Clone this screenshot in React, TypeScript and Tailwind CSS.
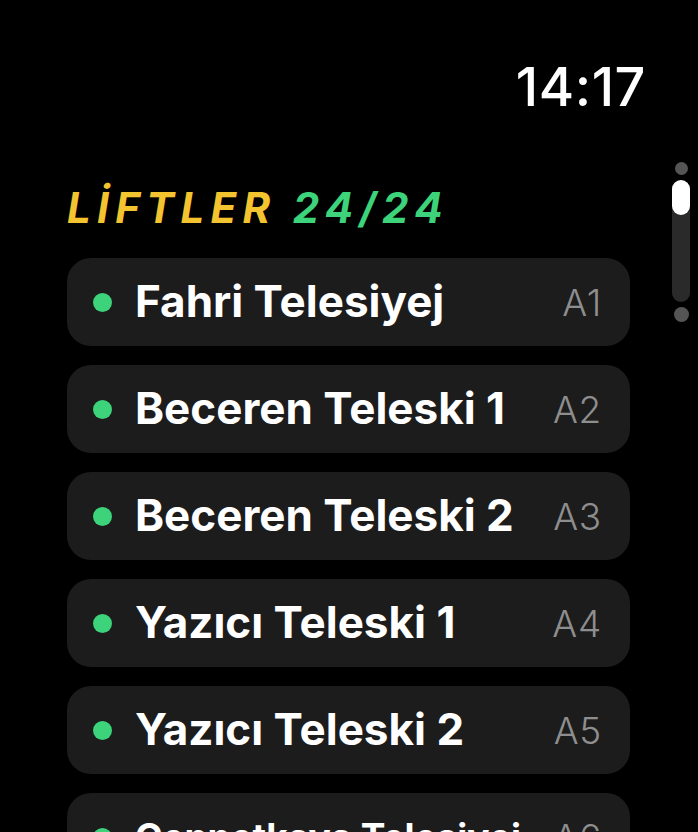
import React from 'react';

const LIFTS = [
  { name: 'Fahri Telesiyej', code: 'A1', size: 'text-[44px]' },
  { name: 'Beceren Teleski 1', code: 'A2', size: 'text-[44px]' },
  { name: 'Beceren Teleski 2', code: 'A3', size: 'text-[44px]' },
  { name: 'Yazıcı Teleski 1', code: 'A4', size: 'text-[44px]' },
  { name: 'Yazıcı Teleski 2', code: 'A5', size: 'text-[44px]' },
  // long name is shrunk to fit, like watchOS does
  { name: 'Cennetkaya Telesiyej', code: 'A6', size: 'text-[37px]' },
];

export default function App() {
  return (
    <div className="relative w-[698px] h-[832px] overflow-hidden bg-black text-white font-['Inter','Noto_Sans',sans-serif]">
      {/* Clock */}
      <div className="flex justify-end pr-[52px] pt-[60px] h-[187px]">
        <span className="text-[54px] font-medium leading-none tracking-[0.01em]">14:17</span>
      </div>

      {/* Scroll indicator */}
      <div className="absolute left-[672px] top-[162px] flex flex-col items-center gap-[5px] w-[18px]">
        <div className="w-[13px] h-[13px] rounded-full bg-[#555]" />
        <div className="w-[18px] h-[122px] rounded-full bg-[#2a2a2a] flex flex-col">
          <div className="w-[18px] h-[35px] rounded-full bg-white" />
        </div>
        <div className="w-[15px] h-[15px] rounded-full bg-[#555]" />
      </div>

      <div className="pl-[67px] w-[630px]">
        <h1 className="text-[42px] font-bold italic leading-none tracking-[0.15em] mb-[29px]">
          <span className="text-[#F4C430]">LİFTLER</span>{' '}
          <span className="text-[#3DD37A]">24/24</span>
        </h1>

        <ul className="flex flex-col gap-[19px]">
          {LIFTS.map((lift) => (
            <li
              key={lift.code}
              className="h-[88px] rounded-[24px] bg-[#1c1c1c] flex items-center pl-[26px] pr-[28px]"
            >
              <span className="w-[19px] h-[19px] rounded-full bg-[#3DD37A] shrink-0" />
              <span className={`ml-[23px] ${lift.size} font-bold leading-none whitespace-nowrap flex-1 pb-[2px]`}>
                {lift.name}
              </span>
              <span className="text-[37px] font-light text-[#8e8e8e] leading-none tracking-[0.02em]">{lift.code}</span>
            </li>
          ))}
        </ul>
      </div>
    </div>
  );
}
